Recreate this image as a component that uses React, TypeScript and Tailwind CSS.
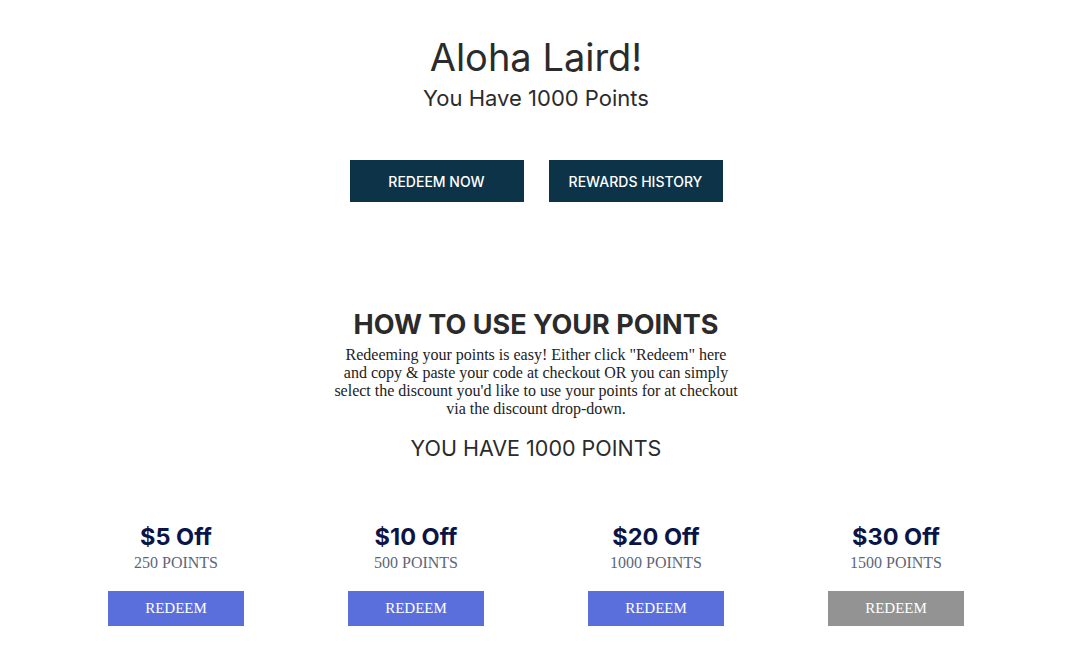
import React from 'react';

const rewards = [
  { label: '$5 Off', points: 250 },
  { label: '$10 Off', points: 500 },
  { label: '$20 Off', points: 1000 },
  { label: '$30 Off', points: 1500 },
];

const balance = 1000;

export default function App() {
  return (
    <div className="min-h-screen bg-white w-[1072px] text-[#333]" style={{ fontFamily: 'Inter, "Liberation Sans", sans-serif' }}>
      <section className="flex flex-col items-center pt-[35px]">
        <h1 className="text-[38px] leading-[44px] font-normal text-[#2b2b2b]">Aloha Laird!</h1>
        <p className="text-[22px] leading-[28px] mt-[5px] text-[#2b2b2b]">You Have {balance} Points</p>
        <div className="flex gap-[25px] mt-[48px]">
          <button className="w-[174px] h-[42px] bg-[#0d3349] text-white text-[14px] font-medium">REDEEM NOW</button>
          <button className="w-[174px] h-[42px] bg-[#0d3349] text-white text-[14px] font-medium">REWARDS HISTORY</button>
        </div>
      </section>

      <section className="flex flex-col items-center mt-[106px]">
        <h2 className="text-[27px] leading-[34px] font-bold text-[#2b2b2b]">HOW TO USE YOUR POINTS</h2>
        <p
          className="w-[407px] text-center text-[16px] leading-[18px] text-[#222] mt-[4px]"
          style={{ fontFamily: '"Liberation Serif", serif' }}
        >
          Redeeming your points is easy! Either click "Redeem" here and copy &amp; paste your code at checkout OR you can simply select the discount you'd like to use your points for at checkout via the discount drop-down.
        </p>
        <p className="text-[21.5px] leading-[28px] mt-[16px] text-[#2b2b2b]">YOU HAVE {balance} POINTS</p>
      </section>

      <section className="w-[960px] mx-auto grid grid-cols-4 mt-[60px]">
        {rewards.map((r) => (
          <div key={r.label} className="flex flex-col items-center">
            <h3 className="text-[23.5px] leading-[30px] font-bold text-[#0c1446]">{r.label}</h3>
            <p className="text-[16px] leading-[20px] text-[#5c6678] mt-[1px]" style={{ fontFamily: '"Liberation Serif", serif' }}>
              {r.points} POINTS
            </p>
            <button
              className={`mt-[18px] w-[136px] h-[35px] text-white text-[15px] ${r.points <= balance ? 'bg-[#5b6fdc]' : 'bg-[#939393]'}`}
              style={{ fontFamily: '"Liberation Serif", serif' }}
            >
              REDEEM
            </button>
          </div>
        ))}
      </section>
    </div>
  );
}
